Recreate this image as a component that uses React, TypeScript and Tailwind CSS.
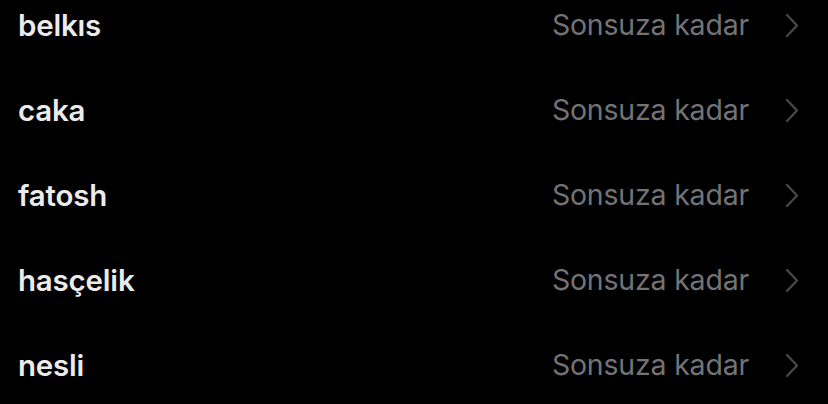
import React from "react";

const names = ["belkıs", "caka", "fatosh", "hasçelik", "nesli"];

function Chevron() {
  return (
    <svg width="14" height="25" viewBox="0 0 14 25" fill="none" className="shrink-0">
      <path d="M2 2 L12 12.5 L2 23" stroke="#48484b" strokeWidth="2.3" strokeLinecap="round" strokeLinejoin="round" />
    </svg>
  );
}

export default function App() {
  return (
    <div className="w-[828px] h-[404px] bg-black overflow-hidden" style={{ fontFamily: "Inter, 'Liberation Sans', sans-serif" }}>
      <div className="flex flex-col -mt-[17px]">
        {names.map((n) => (
          <div key={n} className="h-[85px] flex items-center pl-[18px] pr-[29px]">
            <span className="text-[29.5px] font-semibold text-[#ebebeb] tracking-[-0.2px]">{n}</span>
            <span className="ml-auto text-[28.5px] text-[#737377] tracking-[-0.2px]">Sonsuza kadar</span>
            <span className="ml-[36px]"><Chevron /></span>
          </div>
        ))}
      </div>
    </div>
  );
}
